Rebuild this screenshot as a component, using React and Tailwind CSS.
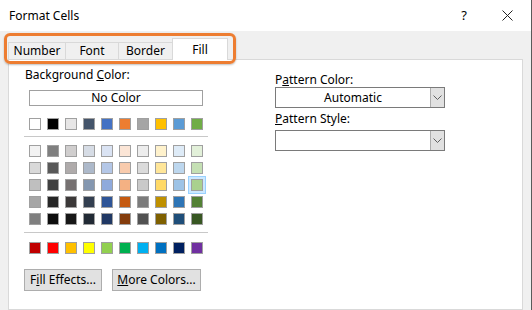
import React from "react";

const themeRow = ["#ffffff", "#000000", "#e7e6e6", "#44546a", "#4472c4", "#ed7d31", "#a5a5a5", "#ffc000", "#5b9bd5", "#70ad47"];

const themeGrid = [
  ["#f2f2f2", "#7f7f7f", "#d0cece", "#d6dce5", "#dae3f3", "#fbe5d6", "#ededed", "#fff2cc", "#deebf7", "#e2f0d9"],
  ["#d9d9d9", "#595959", "#afabab", "#adb9ca", "#b4c7e7", "#f8cbad", "#dbdbdb", "#ffe699", "#bdd7ee", "#c5e0b4"],
  ["#bfbfbf", "#404040", "#767171", "#8497b0", "#8faadc", "#f4b183", "#c9c9c9", "#ffd966", "#9dc3e6", "#a9d18e"],
  ["#a6a6a6", "#262626", "#3b3838", "#333f50", "#2f5597", "#c55a11", "#7b7b7b", "#bf9000", "#2e75b6", "#538135"],
  ["#7f7f7f", "#0d0d0d", "#171717", "#222a35", "#203864", "#843c0c", "#525252", "#7f6000", "#1f4e79", "#385723"],
];

const standard = ["#c00000", "#ff0000", "#ffc000", "#ffff00", "#92d050", "#00b050", "#00b0f0", "#0070c0", "#002060", "#7030a0"];

const Swatch = ({ color, selected }) => (
  <span
    className={
      "block w-[12px] h-[12px] border border-[#a0a0a0] " +
      (selected ? "shadow-[0_0_0_2px_#cce8ff,0_0_0_3px_#99d1ff]" : "")
    }
    style={{ backgroundColor: color }}
  />
);

const SwatchRow = ({ colors, selectedIndex = -1 }) => (
  <div className="flex gap-[6px] ml-[5px]">
    {colors.map((c, i) => (
      <Swatch key={i} color={c} selected={i === selectedIndex} />
    ))}
  </div>
);

const Chevron = () => (
  <svg width="9" height="5" viewBox="0 0 9 5">
    <polyline points="0.5,0.5 4.5,4.5 8.5,0.5" fill="none" stroke="#606060" strokeWidth="1" />
  </svg>
);

const Select = ({ value }) => (
  <div className="flex w-[170px] h-[21px] border border-[#7a7a7a] bg-white">
    <div className="flex-1 flex items-center justify-center text-[12px] text-black">{value}</div>
    <div className="w-[14px] bg-[#e1e1e1] border-l border-[#adadad] flex items-center justify-center">
      <Chevron />
    </div>
  </div>
);

const Tab = ({ label, active }) =>
  active ? (
    <div className="h-[22px] w-[56px] bg-white border border-b-0 border-[#d9d9d9] flex items-center justify-center text-[12px] text-black">
      {label}
    </div>
  ) : (
    <div className="h-[18px] bg-[#f0f0f0] border border-[#d9d9d9] -mr-px flex items-center justify-center text-[12px] text-black"
      style={{ width: label === "Number" ? 58 : label === "Font" ? 54 : 55 }}>
      {label}
    </div>
  );

export default function App() {
  return (
    <div className="w-[532px] h-[310px] bg-[#f0f0f0] flex flex-col overflow-hidden border-r border-[#5a5a5a] font-['Noto_Sans',sans-serif] text-[#000]">
      {/* title bar */}
      <div className="h-[31px] bg-white flex items-center pl-[9px] pr-[18px] shrink-0">
        <span className="text-[12px] flex-1">Format Cells</span>
        <span className="text-[13px] mr-[35px]">?</span>
        <svg width="11" height="11" viewBox="0 0 11 11">
          <path d="M0.5 0.5 L10.5 10.5 M10.5 0.5 L0.5 10.5" stroke="#222" strokeWidth="1" />
        </svg>
      </div>

      <div className="flex-1 flex flex-col pl-[8px] pr-[8px] pt-[7px]">
        {/* tabs */}
        <div className="relative flex items-end -mb-px z-10">
          <Tab label="Number" />
          <Tab label="Font" />
          <Tab label="Border" />
          <Tab label="Fill" active />
          <div className="absolute left-[-4px] top-[-5px] w-[232px] h-[31px] border-[3px] border-[#ed7d31] rounded-[6px] shadow-[0_1px_2px_rgba(0,0,0,0.25)]" />
        </div>

        {/* panel */}
        <div className="flex-1 bg-white border border-[#d9d9d9] flex pl-[15px]">
          <div className="w-[184px] flex flex-col pt-[7px]">
            <div className="text-[12px] leading-[16px] pl-[1px]">
              Background <span className="underline">C</span>olor:
            </div>
            <div className="mt-[7px] ml-[5px] w-[174px] h-[16px] border border-[#a0a0a0] flex items-center justify-center text-[12px]">
              No Color
            </div>
            <div className="mt-[12px]">
              <SwatchRow colors={themeRow} />
            </div>
            <div className="mt-[6px] h-px bg-[#c8c8c8]" />
            <div className="mt-[8px] flex flex-col gap-[5px]">
              {themeGrid.map((row, i) => (
                <SwatchRow key={i} colors={row} selectedIndex={i === 2 ? 9 : -1} />
              ))}
            </div>
            <div className="mt-[7px] h-px bg-[#c8c8c8]" />
            <div className="mt-[9px]">
              <SwatchRow colors={standard} />
            </div>
            <div className="mt-[15px] flex gap-[10px]">
              <div className="w-[78px] h-[22px] bg-[#e1e1e1] border border-[#adadad] flex items-center justify-center text-[12px]">
                F<span className="underline">i</span>ll Effects...
              </div>
              <div className="w-[89px] h-[22px] bg-[#e1e1e1] border border-[#adadad] flex items-center justify-center text-[12px]">
                <span className="underline">M</span>ore Colors...
              </div>
            </div>
          </div>

          <div className="ml-[67px] w-[170px] flex flex-col pt-[12px]">
            <div className="text-[12px] leading-[16px]">
              P<span className="underline">a</span>ttern Color:
            </div>
            <div className="mt-[-1px]">
              <Select value="Automatic" />
            </div>
            <div className="mt-[3px] text-[12px] leading-[16px]">
              <span className="underline">P</span>attern Style:
            </div>
            <div className="mt-[3px]">
              <Select value="" />
            </div>
          </div>
        </div>
      </div>
    </div>
  );
}
